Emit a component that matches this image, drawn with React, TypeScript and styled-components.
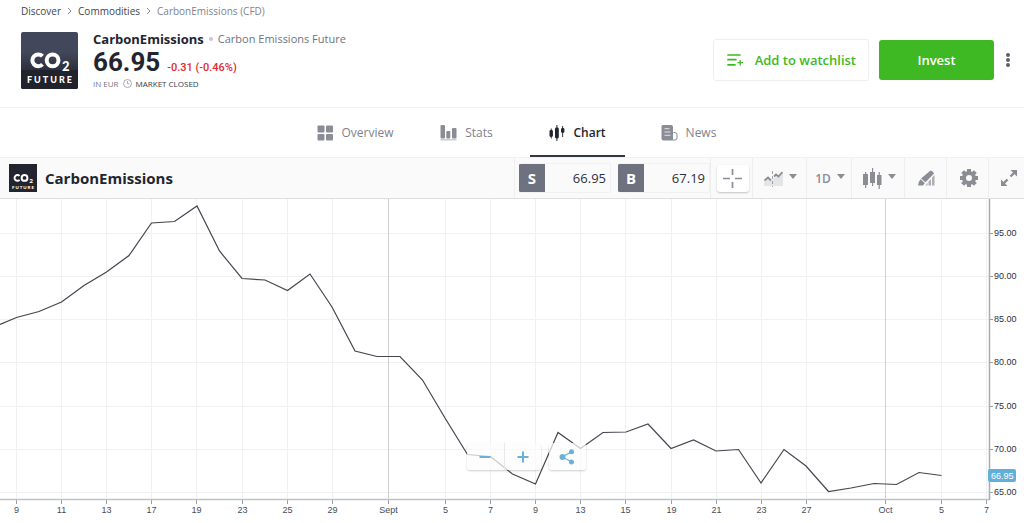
import React from "react";
import styled, { createGlobalStyle } from "styled-components";

const Global = createGlobalStyle`
  *, *::before, *::after { box-sizing: border-box; }
  body { margin: 0; background: #fff; color: #22252f; font-family: "Open Sans", "Noto Sans", sans-serif; }
  button { font: inherit; border: 0; padding: 0; background: none; cursor: pointer; color: inherit; }
  a { color: inherit; text-decoration: none; }
  svg { display: block; flex: none; }
`;

const Page = styled.div`
  display: flex;
  flex-direction: column;
`;

const Header = styled.header`
  display: flex;
  flex-direction: column;
  gap: 12px;
  padding: 3px 12px 18px 21px;
  border-bottom: 1px solid #f1f1f3;
`;

const Breadcrumbs = styled.nav`
  display: flex;
  align-items: center;
  gap: 6px;
  font-size: 10px;
  line-height: 16px;
`;

const Crumb = styled.a<{ $current?: boolean }>`
  color: ${(p) => (p.$current ? "#80838e" : "#41444f")};
  font-weight: 500;
`;

const Summary = styled.div`
  display: flex;
  align-items: center;
`;

const Instrument = styled.div`
  flex: 1;
  display: flex;
  align-items: center;
  gap: 15px;
`;

const Facts = styled.div`
  display: flex;
  flex-direction: column;
`;

const NameRow = styled.div`
  display: flex;
  align-items: center;
  gap: 5px;
  line-height: 16px;
`;

const Name = styled.h1`
  margin: 0;
  font-size: 13px;
  font-weight: 700;
`;

const Dot = styled.span`
  width: 4px;
  height: 4px;
  border-radius: 50%;
  background: #c4c6cc;
`;

const FullName = styled.span`
  font-size: 11px;
  color: #6f7380;
`;

const PriceRow = styled.div`
  display: flex;
  align-items: baseline;
  gap: 7px;
  font-family: Roboto, sans-serif;
`;

const Price = styled.span`
  font-size: 26px;
  font-weight: 700;
  line-height: 31px;
`;

const Change = styled.span`
  font-size: 11px;
  font-weight: 500;
  line-height: 14px;
  color: #df2a32;
`;

const StatusRow = styled.div`
  display: flex;
  align-items: center;
  gap: 4px;
  font-size: 8px;
  line-height: 11px;
  color: #747783;
`;

const Status = styled.span`
  color: #373a46;
`;

const Actions = styled.div`
  display: flex;
  align-items: center;
  gap: 10px;
`;

const WatchButton = styled.button`
  display: flex;
  align-items: center;
  gap: 11px;
  height: 42px;
  padding: 0 12px;
  border: 1px solid #eeeef0;
  border-radius: 3px;
  color: #3fb923;
  font-size: 13px;
  font-weight: 600;
`;

const InvestButton = styled.button`
  width: 115px;
  height: 40px;
  border-radius: 3px;
  background: #3fb923;
  color: #fff;
  font-size: 13px;
  font-weight: 600;
`;

const MoreButton = styled.button`
  width: 8px;
`;

const Tabs = styled.nav`
  display: grid;
  grid-template-columns: repeat(4, 111px);
  justify-content: center;
  height: 49px;
  padding-left: 20px;
`;

const Tab = styled.a<{ $active?: boolean }>`
  display: flex;
  align-items: center;
  justify-content: center;
  gap: 8px;
  margin: 0 8px;
  padding-top: 2px;
  border-bottom: 2px solid ${(p) => (p.$active ? "#343746" : "transparent")};
  color: ${(p) => (p.$active ? "#22252f" : "#7f828c")};
  font-size: 12px;
  font-weight: ${(p) => (p.$active ? 600 : 500)};
`;

const Toolbar = styled.div`
  display: flex;
  height: 42px;
  background: #fafafa;
  border-top: 1px solid #f1f1f1;
  border-bottom: 1px solid #dedede;
`;

const ToolbarTitle = styled.div`
  flex: 1;
  display: flex;
  align-items: center;
  gap: 8px;
  padding-left: 9px;
`;

const ToolbarName = styled.h2`
  margin: 0;
  font-size: 15px;
  font-weight: 700;
`;

const Quotes = styled.div`
  display: flex;
  align-items: center;
  gap: 7px;
  padding-left: 4px;
  border-left: 1px solid #efefef;
`;

const Quote = styled.button`
  display: flex;
  align-items: center;
  width: 92px;
  height: 30px;
  border: 1px solid #f1f1f1;
  border-left: 0;
  border-radius: 2px;
  overflow: hidden;
`;

const Side = styled.span`
  display: grid;
  place-items: center;
  width: 26px;
  height: 30px;
  background: #6e717e;
  color: #fff;
  font-size: 15px;
  font-weight: 700;
`;

const Amount = styled.span`
  flex: 1;
  padding-right: 4px;
  text-align: right;
  font-size: 13px;
  color: #2d303c;
`;

const Tool = styled.button<{ $width: number }>`
  display: flex;
  align-items: center;
  justify-content: center;
  gap: 6px;
  width: ${(p) => p.$width}px;
  padding-left: 2px;
  border-left: 1px solid #eeeeee;
  color: #8b8d94;
  font-size: 12px;
  font-weight: 600;
`;

const Raised = styled.span`
  display: grid;
  place-items: center;
  width: 32px;
  height: 27px;
  border-radius: 3px;
  background: #fff;
  box-shadow: 0 1px 2px rgba(0, 0, 0, 0.22);
`;

const Caret = styled.span`
  border: 4px solid transparent;
  border-top: 5px solid #8b8d94;
  border-bottom: 0;
  margin-bottom: 4px;
`;

const ChartArea = styled.main`
  position: relative;
`;

const ChartSvg = styled.svg`
  width: 100%;
  height: auto;
  font-family: "Liberation Sans", Arial, sans-serif;
  font-size: 9px;
`;

const Floating = styled.div`
  position: absolute;
  left: 0;
  right: 0;
  bottom: 53px;
  display: flex;
  justify-content: center;
  gap: 8px;
  padding-left: 28px;
`;

const FloatGroup = styled.div`
  display: flex;
  border-radius: 3px;
  background: rgba(252, 252, 252, 0.72);
  box-shadow: 0 1px 2px rgba(0, 0, 0, 0.2);
`;

const FloatButton = styled.button`
  display: grid;
  place-items: center;
  width: 37px;
  height: 27px;
  color: #6bb0d8;

  & + & {
    border-left: 1px solid #e8e8e8;
  }
`;

const Logo = ({ size, flat }: { size: number; flat?: boolean }) => (
  <svg width={size} height={size} viewBox="0 0 57 57" role="img" aria-label="CO2 Future">
    <defs>
      <linearGradient id="logoShade" x1="0" y1="0" x2="0" y2="1">
        <stop offset="0" stopColor="#41465a" />
        <stop offset="0.35" stopColor="#43475a" />
        <stop offset="0.66" stopColor="#2d303e" />
      </linearGradient>
    </defs>
    <rect width="57" height="57" rx={flat ? 0 : 2} fill={flat ? "#22252f" : "url(#logoShade)"} />
    {!flat && <path d="M0 38h57v17a2 2 0 0 1-2 2H2a2 2 0 0 1-2-2z" fill="#20232c" />}
    <g fill="none" stroke="#fff" strokeWidth="4">
      <path d="M21.5 24.2a5.9 5.9 0 1 0 0 8.2" />
      <circle cx="31.6" cy="28.3" r="5.9" />
    </g>
    <text x="41" y="39" fill="#fff" fontFamily="Lato, sans-serif" fontSize="13" fontWeight="900">2</text>
    <text x="6" y="51" fill="#fff" fontFamily="Lato, sans-serif" fontSize="9" fontWeight="900" letterSpacing="2">FUTURE</text>
  </svg>
);

const Chevron = () => (
  <svg width="5" height="8" viewBox="0 0 5 8" fill="none" stroke="#868994" aria-hidden="true">
    <path d="M1 1l3 3-3 3" />
  </svg>
);

const Clock = () => (
  <svg width="9" height="9" viewBox="0 0 9 9" fill="none" stroke="#9598a0" strokeWidth="0.8" aria-hidden="true">
    <circle cx="4.5" cy="4.5" r="4" />
    <path d="M4.5 2v2.8h2" />
  </svg>
);

const WatchIcon = () => (
  <svg width="18" height="14" viewBox="0 0 18 14" fill="none" stroke="currentColor" strokeWidth="1.7" aria-hidden="true">
    <path d="M2 2h12M2 6.7h8M2 11.8h7" strokeLinecap="round" />
    <path d="M11.5 9.7H17M14.2 7v5.5" strokeWidth="1.3" />
  </svg>
);

const OverviewIcon = () => (
  <svg width="16" height="16" viewBox="0 0 16 16" fill="#8a8d96" aria-hidden="true">
    <rect x="0.5" y="0.5" width="7" height="7" rx="1" />
    <rect x="9" y="0.5" width="7" height="7" rx="1" />
    <rect x="0.5" y="9" width="7" height="6.5" rx="1" />
    <rect x="9" y="9" width="7" height="6.5" rx="1" />
  </svg>
);

const StatsIcon = () => (
  <svg width="17" height="16" viewBox="0 0 17 16" fill="#8a8d96" aria-hidden="true">
    <rect x="0.5" y="0" width="4.5" height="13.5" rx="1" />
    <rect x="6.3" y="6" width="4" height="7.5" rx="1" />
    <rect x="12" y="3" width="4.5" height="10.5" rx="1" />
    <rect x="0.5" y="14" width="16" height="1.5" opacity="0.45" />
  </svg>
);

const CandlesTabIcon = () => (
  <svg width="16" height="16" viewBox="0 0 16 16" fill="currentColor" aria-hidden="true">
    <rect x="0.5" y="5" width="3.4" height="7" rx="1.4" />
    <rect x="1.8" y="3.5" width="0.9" height="10" />
    <rect x="6" y="2.5" width="3.8" height="11" rx="1.4" />
    <rect x="7.4" y="0" width="1" height="16" />
    <rect x="12" y="3" width="3.4" height="5" rx="1.4" />
    <rect x="13.2" y="1" width="0.9" height="11" />
  </svg>
);

const NewsIcon = () => (
  <svg width="17" height="16" viewBox="0 0 17 16" fill="none" stroke="#8a8d96" aria-hidden="true">
    <path d="M2 0h8q2 0 2 2v13.5H2.5q-2 0-2-2V1.5Q.5 0 2 0z" fill="#8a8d96" stroke="none" />
    <path d="M3.5 3.7h5M3.5 7h6M3.5 10.3h6" stroke="#fff" opacity="0.75" />
    <path d="M12.5 7.5H14q2 0 2 2V13q0 2-2 2h-2" />
  </svg>
);

const CrosshairIcon = () => (
  <svg width="19" height="19" viewBox="0 0 19 19" stroke="currentColor" strokeWidth="1.7" aria-hidden="true">
    <path d="M9.5 0v6M9.5 13v6M0 9.5h7M12 9.5h7" />
  </svg>
);

const CompareIcon = () => (
  <svg width="19" height="17" viewBox="0 0 19 17" fill="none" aria-hidden="true">
    <path d="M0 12l3-4 4 3 2-2 3-3 3 1 4-5v14H0z" fill="#e4e6e6" />
    <path d="M0.5 10.5l3.5-3 3 3" stroke="currentColor" strokeWidth="1.8" />
    <path d="M10 6.5l2-2 2.500 2L18.500 2" stroke="currentColor" strokeWidth="1.8" />
    <path d="M8.5 1v16" stroke="#a3a5aa" strokeDasharray="3 2" />
  </svg>
);

const CandlesIcon = () => (
  <svg width="19" height="21" viewBox="0 0 19 21" fill="currentColor" aria-hidden="true">
    <rect x="0" y="6" width="5" height="11" />
    <rect x="2" y="4" width="1.2" height="16" />
    <rect x="7" y="4" width="5" height="11" />
    <rect x="9" y="0" width="1.2" height="18" />
    <rect x="14" y="7" width="4.5" height="10" />
    <rect x="15.6" y="4" width="1.2" height="17" />
  </svg>
);

const DrawIcon = () => (
  <svg width="18" height="18" viewBox="0 0 18 18" fill="currentColor" aria-hidden="true">
    <path d="M12.5 1.5q2.500 .5 3.500 3L7.500 13.200 3 9.500z" />
    <path d="M2.500 10.300l4.300 3.600L5 16.500H0q.3-3.500 2.500-6.200z" />
    <path d="M7.500 16.500l2-3v3zM10.500 12.500l2.500-2.500v6.500h-2.500zM14 8.500l2.500-2.500v10.500H14z" opacity="0.7" />
  </svg>
);

const GearIcon = () => (
  <svg width="18" height="18" viewBox="0 0 18 18" fill="none" stroke="currentColor" strokeWidth="4" aria-hidden="true">
    <circle cx="9" cy="9" r="5" />
    {[0, 45, 90, 135].map((a) => (
      <path key={a} d="M9 0v3M9 15v3" transform={`rotate(${a} 9 9)`} />
    ))}
  </svg>
);

const ExpandIcon = () => (
  <svg width="20" height="18" viewBox="-2 0 20 18" fill="currentColor" aria-hidden="true">
    <path d="M10.5 1H17v6.5zM1 10.5V17h6.5z" />
    <path d="M15.5 2.5l-5 5M2.5 15.5l5-5" stroke="currentColor" strokeWidth="2.4" />
  </svg>
);

const ShareIcon = () => (
  <svg width="16" height="16" viewBox="0 0 16 16" fill="currentColor" aria-hidden="true">
    <path d="M13 2.5L3 8l10 5" fill="none" stroke="currentColor" strokeWidth="1.2" />
    <circle cx="3.5" cy="8" r="3" />
    <circle cx="12.5" cy="2.7" r="2.5" />
    <circle cx="12.5" cy="13" r="2.5" />
  </svg>
);

const SignIcon = ({ plus }: { plus?: boolean }) => (
  <svg width="12" height="12" viewBox="0 0 12 12" stroke="currentColor" strokeWidth="2" aria-hidden="true">
    <path d={plus ? "M0.5 6h11M6 0.5v11" : "M0.5 6h11"} />
  </svg>
);

const days: [string, number][] = [
  ["9", 16], ["11", 61], ["13", 106], ["17", 151], ["19", 196], ["23", 242], ["25", 287], ["29", 332],
  ["Sept", 388], ["5", 445], ["7", 490], ["9", 535], ["13", 580], ["15", 625], ["19", 671], ["21", 716],
  ["23", 761], ["27", 806], ["Oct", 885], ["5", 941], ["7", 986],
];

const levels: [string, number][] = [
  ["95.00", 34], ["90.00", 77], ["85.00", 120], ["80.00", 163], ["75.00", 207], ["70.00", 250], ["65.00", 293],
];

const series =
  "0,125.5 16.5,118.5 39,112.5 61.5,103 84,86.5 106.5,73 129,56.5 151.5,24 174.5,22.5 197,7 219.5,52 242,79.5 265,81 287.5,91.5 310,75 332,108 355,152 377,157.5 400,157.5 422.5,181 445,219 467.5,255.5 490.5,257.5 512.5,275 535.5,285 558,233.5 580.5,249.5 603,233.5 626,233 648,225 671,249.5 693.5,241 716,252 738.5,250.5 761,284 784,250.5 806,267 828.5,292.5 851,289 874,284.5 896.5,285.5 919,273.5 941.5,276.5";

const PriceChart = () => (
  <ChartSvg viewBox="0 0 1024 324" role="img" aria-label="CarbonEmissions price chart">
    {levels.map(([label, y]) => (
      <g key={label}>
        <path d={`M0 ${y}.5H989`} stroke="#f1f1f2" />
        <path d={`M989 ${y}.5h4`} stroke="#9a9ca3" />
        <text x="994" y={y + 3} fill="#2d303c">{label}</text>
      </g>
    ))}
    {days.map(([label, x]) => {
      const month = label.length > 2;
      return (
        <g key={x}>
          <path d={`M${x}.5 0V300`} stroke={month ? "#d0d0d2" : "#f1f1f2"} />
          <path d={`M${x}.5 301v4`} stroke="#9a9ca3" />
          <text x={x + 0.5} y="314" textAnchor="middle" fill="#484b56">{label}</text>
        </g>
      );
    })}
    <path d="M0 300.5H990" stroke="#c0c1c5" strokeWidth="1.5" />
    <path d="M989.5 0V301" stroke="#a9abb0" strokeWidth="1.5" />
    <polyline points={series} fill="none" stroke="#45454f" strokeWidth="1.2" />
    <rect x="988" y="270" width="28" height="13" rx="2" fill="#62afd9" />
    <text x="991" y="280" fill="#fff">66.95</text>
  </ChartSvg>
);

export default function App() {
  return (
    <Page>
      <Global />
      <Header>
        <Breadcrumbs aria-label="Breadcrumb">
          <Crumb href="#discover">Discover</Crumb>
          <Chevron />
          <Crumb href="#commodities">Commodities</Crumb>
          <Chevron />
          <Crumb href="#carbon" $current>CarbonEmissions (CFD)</Crumb>
        </Breadcrumbs>
        <Summary>
          <Instrument>
            <Logo size={57} />
            <Facts>
              <NameRow>
                <Name>CarbonEmissions</Name>
                <Dot />
                <FullName>Carbon Emissions Future</FullName>
              </NameRow>
              <PriceRow>
                <Price>66.95</Price>
                <Change>-0.31 (-0.46%)</Change>
              </PriceRow>
              <StatusRow>
                <span>IN EUR</span>
                <Clock />
                <Status>MARKET CLOSED</Status>
              </StatusRow>
            </Facts>
          </Instrument>
          <Actions>
            <WatchButton>
              <WatchIcon />
              Add to watchlist
            </WatchButton>
            <InvestButton>Invest</InvestButton>
            <MoreButton aria-label="More">
              <svg width="8" height="16" viewBox="0 0 8 16" fill="#5c5f6b">
                <circle cx="4" cy="3" r="2" />
                <circle cx="4" cy="8" r="2" />
                <circle cx="4" cy="13" r="2" />
              </svg>
            </MoreButton>
          </Actions>
        </Summary>
      </Header>
      <Tabs>
        <Tab href="#overview"><OverviewIcon />Overview</Tab>
        <Tab href="#stats"><StatsIcon />Stats</Tab>
        <Tab href="#chart" $active aria-current="page"><CandlesTabIcon />Chart</Tab>
        <Tab href="#news"><NewsIcon />News</Tab>
      </Tabs>
      <Toolbar>
        <ToolbarTitle>
          <Logo size={28} flat />
          <ToolbarName>CarbonEmissions</ToolbarName>
        </ToolbarTitle>
        <Quotes>
          <Quote><Side>S</Side><Amount>66.95</Amount></Quote>
          <Quote><Side>B</Side><Amount>67.19</Amount></Quote>
        </Quotes>
        <Tool $width={42} aria-label="Crosshair"><Raised><CrosshairIcon /></Raised></Tool>
        <Tool $width={54} aria-label="Compare"><CompareIcon /><Caret /></Tool>
        <Tool $width={45}>1D<Caret /></Tool>
        <Tool $width={53} aria-label="Chart type"><CandlesIcon /><Caret /></Tool>
        <Tool $width={42} aria-label="Draw"><DrawIcon /></Tool>
        <Tool $width={42} aria-label="Settings"><GearIcon /></Tool>
        <Tool $width={36} aria-label="Full screen"><ExpandIcon /></Tool>
      </Toolbar>
      <ChartArea>
        <PriceChart />
        <Floating>
          <FloatGroup>
            <FloatButton aria-label="Zoom out"><SignIcon /></FloatButton>
            <FloatButton aria-label="Zoom in"><SignIcon plus /></FloatButton>
          </FloatGroup>
          <FloatGroup>
            <FloatButton aria-label="Share"><ShareIcon /></FloatButton>
          </FloatGroup>
        </Floating>
      </ChartArea>
    </Page>
  );
}
